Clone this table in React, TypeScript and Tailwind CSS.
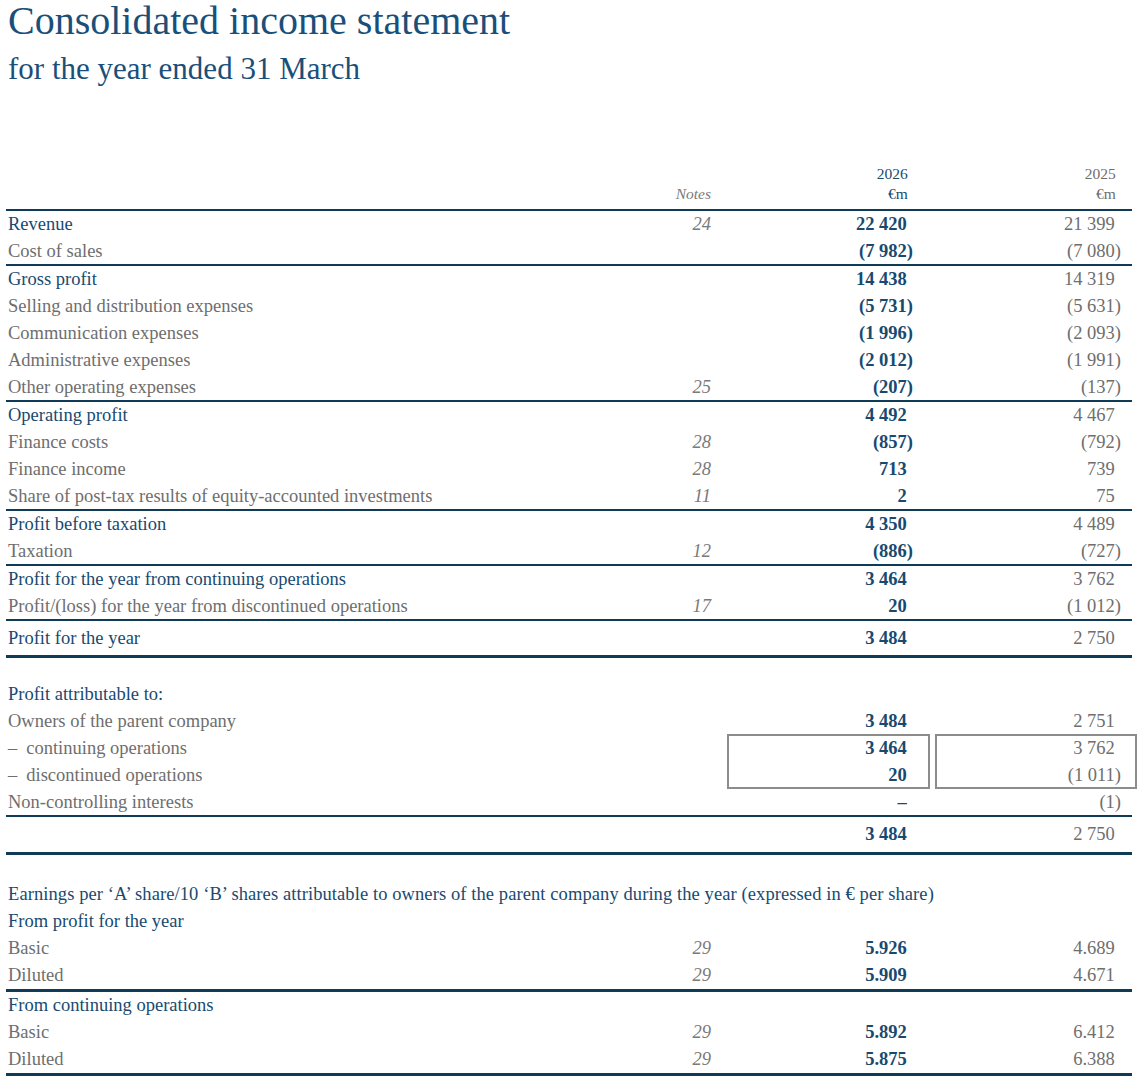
import React from 'react';

type Line = 'none' | 'thin' | 'thick';

type RowData = {
  label: React.ReactNode;
  note?: string;
  cur?: string;
  prev?: string;
  blue?: boolean;
  line?: Line;
  tall?: boolean;
};

const cols = 'grid grid-cols-[594px_111px_202px_208px_11px] items-center';

// keeps digits aligned when the other rows have a closing paren hanging out
const Num: React.FC<{ v?: string }> = ({ v }) => {
  if (!v) return null;
  if (v.endsWith(')')) return <span>{v}</span>;
  return (
    <span>
      {v}
      <span className="invisible">)</span>
    </span>
  );
};

const rowHeight = (r: RowData) => {
  if (r.line === 'thick') return r.tall ? 'h-[37px] border-b-[3px] border-[#0f3b57]' : 'h-[30px] border-b-[3px] border-[#0f3b57]';
  if (r.line === 'thin') return 'h-[28px] border-b-2 border-[#0f3b57]';
  return 'h-[27px]';
};

const Row: React.FC<{ r: RowData }> = ({ r }) => (
  <div className={`${cols} ${rowHeight(r)}`}>
    <div className={`pl-[2px] whitespace-nowrap ${r.blue ? 'text-[#184a70]' : 'text-[#6e6e6e]'}`}>{r.label}</div>
    <div className="text-right italic text-[#7a7a7a]">{r.note}</div>
    <div className="text-right font-bold text-[#184a70]">
      <Num v={r.cur} />
    </div>
    <div className="text-right text-[#6e6e6e]">
      <Num v={r.prev} />
    </div>
    <div />
  </div>
);

const income: RowData[] = [
  { label: 'Revenue', note: '24', cur: '22 420', prev: '21 399', blue: true },
  { label: 'Cost of sales', cur: '(7 982)', prev: '(7 080)', line: 'thin' },
  { label: 'Gross profit', cur: '14 438', prev: '14 319', blue: true },
  { label: 'Selling and distribution expenses', cur: '(5 731)', prev: '(5 631)' },
  { label: 'Communication expenses', cur: '(1 996)', prev: '(2 093)' },
  { label: 'Administrative expenses', cur: '(2 012)', prev: '(1 991)' },
  { label: 'Other operating expenses', note: '25', cur: '(207)', prev: '(137)', line: 'thin' },
  { label: 'Operating profit', cur: '4 492', prev: '4 467', blue: true },
  { label: 'Finance costs', note: '28', cur: '(857)', prev: '(792)' },
  { label: 'Finance income', note: '28', cur: '713', prev: '739' },
  { label: 'Share of post-tax results of equity-accounted investments', note: '11', cur: '2', prev: '75', line: 'thin' },
  { label: 'Profit before taxation', cur: '4 350', prev: '4 489', blue: true },
  { label: 'Taxation', note: '12', cur: '(886)', prev: '(727)', line: 'thin' },
  { label: 'Profit for the year from continuing operations', cur: '3 464', prev: '3 762', blue: true },
  { label: 'Profit/(loss) for the year from discontinued operations', note: '17', cur: '20', prev: '(1 012)', line: 'thin' },
  { label: 'Profit for the year', cur: '3 484', prev: '2 750', blue: true, line: 'thick', tall: true },
];

const eps: RowData[] = [
  { label: 'From profit for the year', blue: true },
  { label: 'Basic', note: '29', cur: '5.926', prev: '4.689' },
  { label: 'Diluted', note: '29', cur: '5.909', prev: '4.671', line: 'thick' },
  { label: 'From continuing operations', blue: true },
  { label: 'Basic', note: '29', cur: '5.892', prev: '6.412' },
  { label: 'Diluted', note: '29', cur: '5.875', prev: '6.388', line: 'thick' },
];

const App: React.FC = () => {
  return (
    <div
      className="w-[1144px] min-h-[1080px] bg-white text-[18.5px] leading-[27px]"
      style={{ fontFamily: '"Liberation Serif", "Times New Roman", serif' }}
    >
      <div className="pl-[8px] text-[#1a4f7a]">
        <h1 className="text-[40px] leading-[40px] pt-[1px]">Consolidated income statement</h1>
        <h2 className="text-[31px] leading-[36px] mt-[10px]">for the year ended 31 March</h2>
      </div>

      <div className="ml-[6px] w-[1126px] mt-[76px]">
        {/* column heads */}
        <div className={`${cols} items-end h-[48px] pb-[5px] border-b-2 border-[#0f3b57] text-[15.5px] leading-[20px]`}>
          <div />
          <div className="text-right italic text-[#7a7a7a]">Notes</div>
          <div className="text-right text-[#184a70]">
            <div>2026<span className="invisible">)</span></div>
            <div>€m<span className="invisible">)</span></div>
          </div>
          <div className="text-right text-[#6e6e6e]">
            <div>2025<span className="invisible">)</span></div>
            <div>€m<span className="invisible">)</span></div>
          </div>
          <div />
        </div>

        {income.map((r, i) => (
          <Row key={i} r={r} />
        ))}

        {/* attributable */}
        <div className="mt-[23px]">
          <Row r={{ label: 'Profit attributable to:', blue: true }} />
          <Row r={{ label: 'Owners of the parent company', cur: '3 484', prev: '2 751' }} />
          <div className={`${cols} items-start h-[54px]`}>
            <div className="pl-[2px] text-[#6e6e6e]">
              <div><span className="mr-[9px]">–</span>continuing operations</div>
              <div><span className="mr-[9px]">–</span>discontinued operations</div>
            </div>
            <div />
            <div className="ml-[16px] -mr-[17px] h-[55px] -mt-[1px] border-2 border-[#8c8c8c] pr-[15px] text-right font-bold text-[#184a70]">
              <div className="-mt-[1px]">
                <div>3 464<span className="invisible">)</span></div>
                <div>20<span className="invisible">)</span></div>
              </div>
            </div>
            <div className="ml-[22px] -mr-[16px] h-[55px] -mt-[1px] border-2 border-[#8c8c8c] pr-[14px] text-right text-[#6e6e6e]">
              <div className="-mt-[1px]">
                <div>3 762<span className="invisible">)</span></div>
                <div>(1 011)</div>
              </div>
            </div>
            <div />
          </div>
          <Row r={{ label: 'Non-controlling interests', cur: '–', prev: '(1)', line: 'thin' }} />
          <div className={`${cols} h-[38px] border-b-[3px] border-[#0f3b57]`}>
            <div />
            <div />
            <div className="text-right font-bold text-[#184a70]">
              <Num v="3 484" />
            </div>
            <div className="text-right text-[#6e6e6e]">
              <Num v="2 750" />
            </div>
            <div />
          </div>
        </div>

        {/* earnings per share */}
        <div className="mt-[26px]">
          <div className="h-[27px] pl-[2px] whitespace-nowrap tracking-[0.09px] text-[#184a70]">
            Earnings per ‘A’ share/10 ‘B’ shares attributable to owners of the parent company during the year (expressed in € per share)
          </div>
          {eps.map((r, i) => (
            <Row key={i} r={r} />
          ))}
        </div>
      </div>
    </div>
  );
};

export default App;
